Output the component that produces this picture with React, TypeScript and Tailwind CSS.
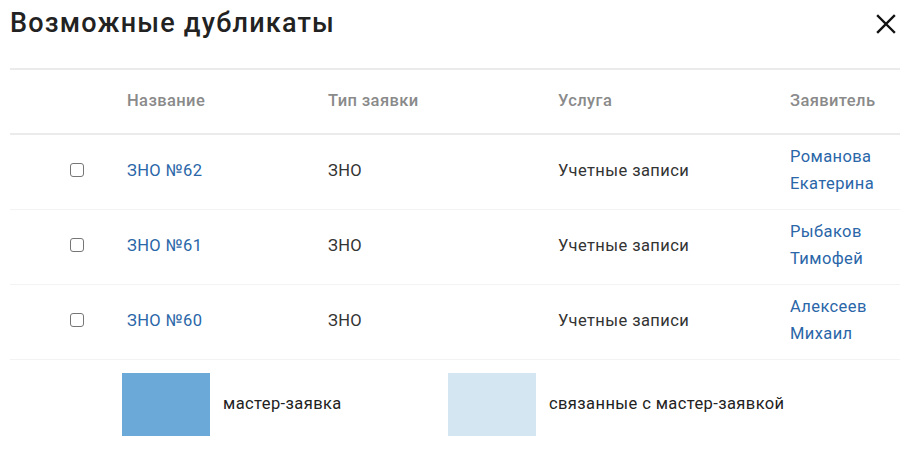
import React from "react";

const rows = [
  { name: "ЗНО №62", type: "ЗНО", service: "Учетные записи", a1: "Романова", a2: "Екатерина" },
  { name: "ЗНО №61", type: "ЗНО", service: "Учетные записи", a1: "Рыбаков", a2: "Тимофей" },
  { name: "ЗНО №60", type: "ЗНО", service: "Учетные записи", a1: "Алексеев", a2: "Михаил" },
];

export default function App() {
  return (
    <div className="w-[908px] h-[456px] bg-white overflow-hidden" style={{ fontFamily: "Roboto, 'Noto Sans', sans-serif" }}>
      <div className="flex items-center justify-between pl-[10px] pr-[12px] pt-[3px] h-[44px]">
        <h1 className="text-[27px] font-medium text-[#222] leading-none tracking-[1.2px]">Возможные дубликаты</h1>
        <svg width="20" height="20" viewBox="0 0 20 20" className="mt-[1px]">
          <path d="M2 2 L18 18 M18 2 L2 18" stroke="#111" strokeWidth="2.4" strokeLinecap="square" />
        </svg>
      </div>
      <div className="mx-[10px] mt-[24px] w-[890px] text-[16.5px] tracking-[0.4px]">
        <div className="grid grid-cols-[107px_201px_230px_232px_120px] h-[67px] border-t-2 border-b-2 border-[#ebebeb] items-center font-medium text-[#8a8a8a]">
          <div />
          <div className="pl-[10px]">Название</div>
          <div className="pl-[10px]">Тип заявки</div>
          <div className="pl-[10px]">Услуга</div>
          <div className="pl-[10px]">Заявитель</div>
        </div>
        {rows.map((r) => (
          <div key={r.name} className="grid grid-cols-[107px_201px_230px_232px_120px] h-[75px] border-b border-[#f3f3f3] items-center text-[#333]">
            <div className="pl-[60px]">
              <div className="w-[14px] h-[14px] border border-[#767676] rounded-[3px] bg-white -mt-[4px]" />
            </div>
            <div className="pl-[10px] text-[#2a66a8] -mt-[2px]">{r.name}</div>
            <div className="pl-[10px] -mt-[2px]">{r.type}</div>
            <div className="pl-[10px] -mt-[2px]">{r.service}</div>
            <div className="pl-[10px] text-[#2a66a8] leading-[27px] -mt-[4px]">
              <div>{r.a1}</div>
              <div>{r.a2}</div>
            </div>
          </div>
        ))}
        <div className="flex items-center pl-[112px] pt-[13px] text-[#222]">
          <div className="flex items-center w-[326px]">
            <div className="w-[88px] h-[63px] bg-[#6ba9d9]" />
            <span className="ml-[13px]">мастер-заявка</span>
          </div>
          <div className="w-[88px] h-[63px] bg-[#d5e6f3]" />
          <span className="ml-[13px]">связанные с мастер-заявкой</span>
        </div>
      </div>
    </div>
  );
}
